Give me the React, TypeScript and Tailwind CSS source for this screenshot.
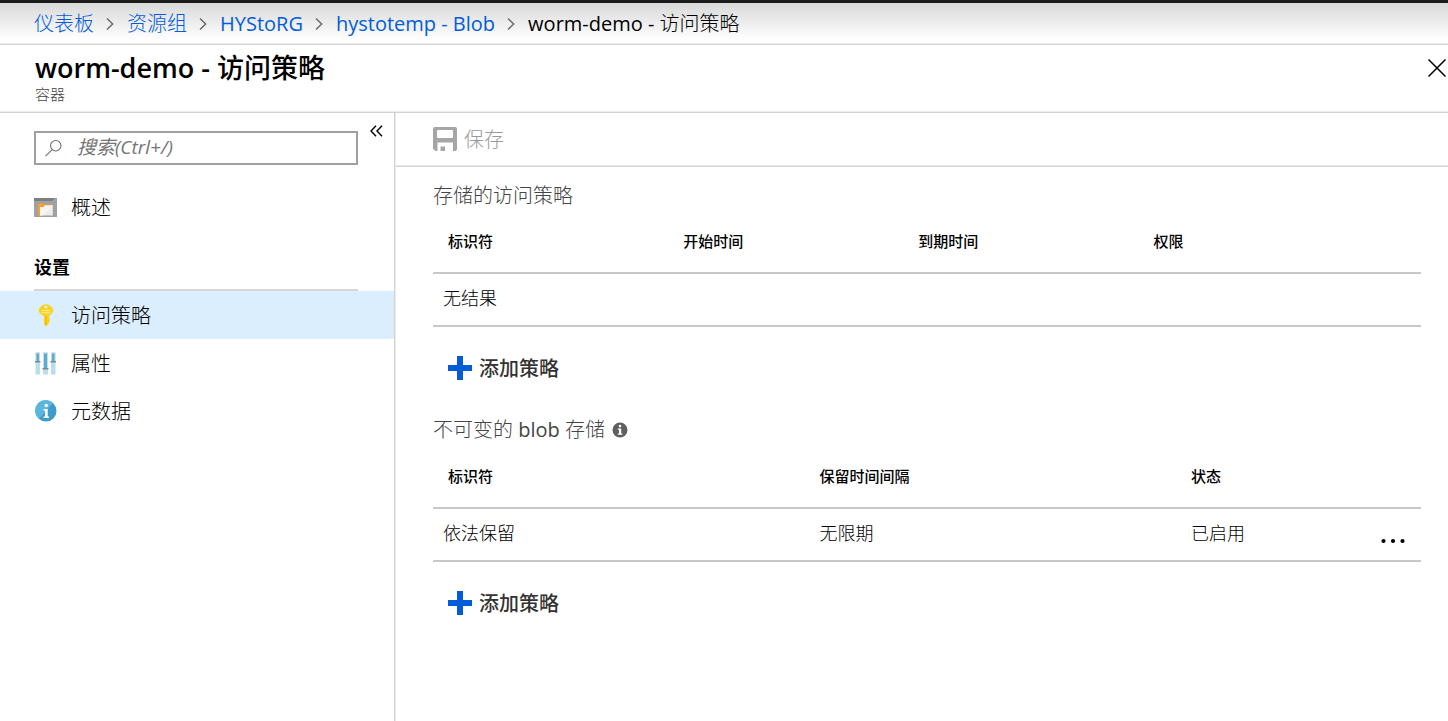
import type { ReactNode } from "react";

function Chevron() {
  return (
    <svg width="9" height="14" viewBox="0 0 9 14" fill="none" stroke="#666" strokeWidth="1.4" aria-hidden="true">
      <path d="M1 1.5 6.700 7 1 12.500" />
    </svg>
  );
}

function OverviewIcon() {
  return (
    <svg width="23" height="19" viewBox="0 0 23 19" aria-hidden="true">
      <rect width="23" height="19" fill="#a0a1a2" />
      <rect y="0" width="23" height="3" fill="#7f7f7f" />
      <path d="M23 0v3h-5l3-3z" fill="#a0a1a2" />
      <path d="M4 17.500V5.500h4.500l1.300 1H18v2H6.200v9z" fill="#ff9e2b" />
      <path d="M6 17.500V9h3.500l1.500-1.500h7.800v10z" fill="#ececec" />
      <path d="M6 17.500V9h3.500l1.500-1.500h7.800v.8L9 17.500z" fill="#f5f5f5" />
    </svg>
  );
}

function KeyIcon() {
  return (
    <svg width="16" height="24" viewBox="0 0 16 24" aria-hidden="true">
      <path
        fillRule="evenodd"
        d="M8 1.200c1.500 0 3.500.9 5 2.300 1.300 1.200 2.200 2.800 2.200 4 0 1.700-1.300 3.500-4.200 5.400v1.300l1.200 1-1.200 1 1.200 1.200-1.200 1.100v1.700L8 23.400l-2-2.200v-8.300C2.500 11.500.8 9.500.8 7.500c0-1.200.9-2.800 2.200-4 1.500-1.400 3.500-2.300 5-2.300zM8 2.600a1.500 1.500 0 1 0 0 3 1.500 1.500 0 0 0 0-3z"
        fill="#fcd116"
      />
      <path d="M3.500 7.600h9M3.500 9.800h9" stroke="#fff3b0" strokeWidth="1" />
      <path d="M8 13v9" stroke="#e8b000" strokeWidth="1" />
    </svg>
  );
}

function SlidersIcon() {
  return (
    <svg width="21" height="23" viewBox="0 0 21 23" aria-hidden="true">
      <path d="M.5.500h4.500v22H.5zM8 .500h5v22H8zM16 .500h4.500v22H16z" fill="#b8dded" />
      <path d="M.5.500h4.500v9H.5zM8 .500h5v16H8zM16 .500h4.500v9H16z" fill="#d5d7d8" />
      <path d="M1.500 1.500h2.500v8H1.500zM9 1.500h3v15H9zM17 1.500h2.500v8H17z" fill="#52b0d8" />
      <path d="M0 9h5.500v1.500H0zM7.500 16h6v1.500h-6zM15.500 9H21v1.500h-5.500z" fill="#858789" />
    </svg>
  );
}

function InfoBlueIcon() {
  return (
    <svg width="22" height="22" viewBox="0 0 22 22" aria-hidden="true">
      <circle cx="11" cy="11" r="10.500" fill="#3d9ccc" />
      <path d="M4 18.800A10.500 10.500 0 1 1 18 3.200z" fill="#5bb5dc" />
      <circle cx="11.200" cy="5.500" r="1.700" fill="#fff" />
      <path d="M8.500 9h4.200v7.500H14V18H8.500v-1.500H10v-6H8.500z" fill="#fff" />
    </svg>
  );
}

function InfoIcon() {
  return (
    <svg width="16" height="16" viewBox="0 0 16 16" aria-hidden="true">
      <circle cx="8" cy="8" r="7.500" fill="#5f5f5f" />
      <circle cx="8" cy="4.100" r="1.300" fill="#fff" />
      <path d="M5.800 6.500h3.400v5h1.200v1.200H5.800v-1.200H7V7.700H5.800z" fill="#fff" />
    </svg>
  );
}

function SaveIcon() {
  return (
    <svg width="24" height="24" viewBox="0 0 24 24" aria-hidden="true">
      <path
        fillRule="evenodd"
        d="M2 0h20a2 2 0 0 1 2 2v20a2 2 0 0 1-2 2h-2v-8.500H4.500V24H2.500L0 22V2a2 2 0 0 1 2-2zM5 3a1 1 0 0 0-1 1v6a1 1 0 0 0 1 1h14a1 1 0 0 0 1-1V4a1 1 0 0 0-1-1zM7.500 19.500H12V24H7.500z"
        fill="#a6a6a6"
      />
    </svg>
  );
}

function SearchIcon() {
  return (
    <svg width="20" height="20" viewBox="0 0 20 20" fill="none" stroke="#707070" strokeWidth="1.200" aria-hidden="true">
      <circle cx="12" cy="7.500" r="5.800" />
      <path d="M7.900 11.700.7 19" />
    </svg>
  );
}

function Crumb({ children }: { children: ReactNode }) {
  return (
    <li className="flex items-center gap-3">
      <a href="#" className="text-[#015cda]">{children}</a>
      <Chevron />
    </li>
  );
}

function NavItem({ icon, label, active = false }: { icon: ReactNode; label: string; active?: boolean }) {
  return (
    <li>
      <a
        href="#"
        aria-current={active ? "page" : undefined}
        className={`flex h-12 items-center gap-3.5 pl-[34px] text-xl font-light text-black ${active ? "bg-[#dbeefe]" : ""}`}
      >
        <span className="flex w-[23px] justify-center">{icon}</span>
        <span className="pt-0.5">{label}</span>
      </a>
    </li>
  );
}

function AddButton() {
  return (
    <button type="button" className="ml-[15px] flex h-[82px] items-center gap-[7px] text-xl font-medium text-[#333]">
      <svg width="24" height="24" viewBox="0 0 24 24" aria-hidden="true">
        <path d="M9 0h6v9h9v6h-9v9H9v-9H0V9h9z" fill="#015cda" />
      </svg>
      <span className="pt-0.5">添加策略</span>
    </button>
  );
}

const headCell = "px-[15px] text-left text-[15px] leading-5 font-medium";
const headRow = "h-[63px] border-b-2 border-[#c8c8c8]";
const bodyRow = "h-[53px] border-b-2 border-[#c8c8c8] text-lg font-light";

export default function App() {
  return (
    <div className="flex min-h-screen flex-col bg-white font-['Open_Sans','Noto_Sans_CJK_SC',sans-serif] text-black">
      <nav
        aria-label="面包屑"
        className="h-[45px] border-t-3 border-b border-t-[#1b1a1c] border-b-[#d2d2d2] bg-linear-to-b from-[#d9d9d9] to-white to-90% pl-[34px] shadow-[inset_0_-1px_#ebebeb]"
      >
        <ol className="flex h-10 items-center gap-3 pt-0.5 text-xl font-light whitespace-nowrap">
          <Crumb>仪表板</Crumb>
          <Crumb>资源组</Crumb>
          <Crumb><span className="font-normal">HYStoRG</span></Crumb>
          <Crumb><span className="font-normal">hystotemp - Blob</span></Crumb>
          <li aria-current="page"><span className="font-normal">worm-demo - </span>访问策略</li>
        </ol>
      </nav>

      <header className="flex h-[68px] items-start justify-between border-b border-[#d2d2d2] pl-[35px] shadow-[inset_0_-1px_#ebebeb]">
        <div className="pt-1.5">
          <h1 className="text-[27px] leading-[34px] font-medium">
            <span className="font-semibold">worm-demo - </span>访问策略
          </h1>
          <p className="text-[15px] leading-[18px] font-light text-[#444]">容器</p>
        </div>
        <button type="button" aria-label="关闭" className="mt-3.5 mr-0.5">
          <svg width="18" height="18" viewBox="0 0 18 18" stroke="#000" strokeWidth="1.500" aria-hidden="true">
            <path d="M.5.500l17 17M17.500.500l-17 17" />
          </svg>
        </button>
      </header>

      <div className="flex grow">
        <aside className="w-[395px] shrink-0 border-r border-[#d2d2d2]">
          <div className="flex items-start gap-3 pt-[18px] pl-[34px]">
            <label className="flex h-[34px] w-[324px] items-center gap-3.5 border-2 border-[#a0a0a0] pl-[9px]">
              <SearchIcon />
              <input
                type="search"
                aria-label="搜索"
                placeholder="搜索(Ctrl+/)"
                className="w-full min-w-0 pb-0.5 text-[19px] leading-6 italic outline-none placeholder:text-[#757575]"
              />
            </label>
            <button type="button" aria-label="折叠菜单" className="-mt-1.5 pr-2">
              <svg width="13" height="12" viewBox="0 0 13 12" fill="none" stroke="#000" strokeWidth="1.400" aria-hidden="true">
                <path d="M6 .700 1 6l5 5.300M12 .700 7 6l5 5.300" />
              </svg>
            </button>
          </div>

          <ul className="pt-[18px]">
            <NavItem icon={<OverviewIcon />} label="概述" />
          </ul>
          <h2 className="mr-9 ml-[34px] flex h-[60px] items-center border-b-2 border-[#d6d6d6] pt-[18px] pb-1 text-lg font-bold">
            设置
          </h2>
          <ul>
            <NavItem icon={<KeyIcon />} label="访问策略" active />
            <NavItem icon={<SlidersIcon />} label="属性" />
            <NavItem icon={<InfoBlueIcon />} label="元数据" />
          </ul>
        </aside>

        <main className="min-w-0 grow border-l border-[#ebebeb]">
          <div className="flex h-[54px] items-center border-b border-[#d2d2d2] pb-0.5 pl-[37px] shadow-[inset_0_-1px_#ebebeb]">
            <button type="button" disabled className="flex items-center gap-[7px] text-xl font-light text-[#999]">
              <SaveIcon />
              <span className="pt-0.5">保存</span>
            </button>
          </div>

          <div className="pr-[27px] pl-[37px]">
            <section>
              <h2 className="flex h-[43px] items-end text-xl font-light text-[#444]">存储的访问策略</h2>
              <table className="w-full table-fixed border-collapse">
                <thead>
                  <tr className={headRow}>
                    <th className={`w-[23.8%] ${headCell}`}>标识符</th>
                    <th className={`w-[23.8%] ${headCell}`}>开始时间</th>
                    <th className={`w-[23.8%] ${headCell}`}>到期时间</th>
                    <th className={headCell}>权限</th>
                  </tr>
                </thead>
                <tbody>
                  <tr className={bodyRow}>
                    <td colSpan={4} className="pb-1 pl-2.5">无结果</td>
                  </tr>
                </tbody>
              </table>
              <AddButton />
            </section>

            <section>
              <h2 className="flex h-9 items-center gap-[7px] pt-1.5 text-xl font-light text-[#444]">
                <span>不可变的 <span className="font-normal">blob</span> 存储</span>
                <InfoIcon />
              </h2>
              <table className="w-full table-fixed border-collapse">
                <thead>
                  <tr className={headRow}>
                    <th className={`w-[37.6%] ${headCell}`}>标识符</th>
                    <th className={`w-[37.6%] ${headCell}`}>保留时间间隔</th>
                    <th className={headCell}>状态</th>
                    <td className="w-14" />
                  </tr>
                </thead>
                <tbody>
                  <tr className={bodyRow}>
                    <td className="pb-1 pl-2.5">依法保留</td>
                    <td className="px-[15px] pb-1">无限期</td>
                    <td className="px-[15px] pb-1">已启用</td>
                    <td className="pl-4">
                      <button type="button" aria-label="更多" className="mt-3 block">
                        <svg width="24" height="6" viewBox="0 0 24 6" aria-hidden="true">
                          <circle cx="2.500" cy="3" r="2.100" />
                          <circle cx="12" cy="3" r="2.100" />
                          <circle cx="21.500" cy="3" r="2.100" />
                        </svg>
                      </button>
                    </td>
                  </tr>
                </tbody>
              </table>
              <AddButton />
            </section>
          </div>
        </main>
      </div>
    </div>
  );
}
